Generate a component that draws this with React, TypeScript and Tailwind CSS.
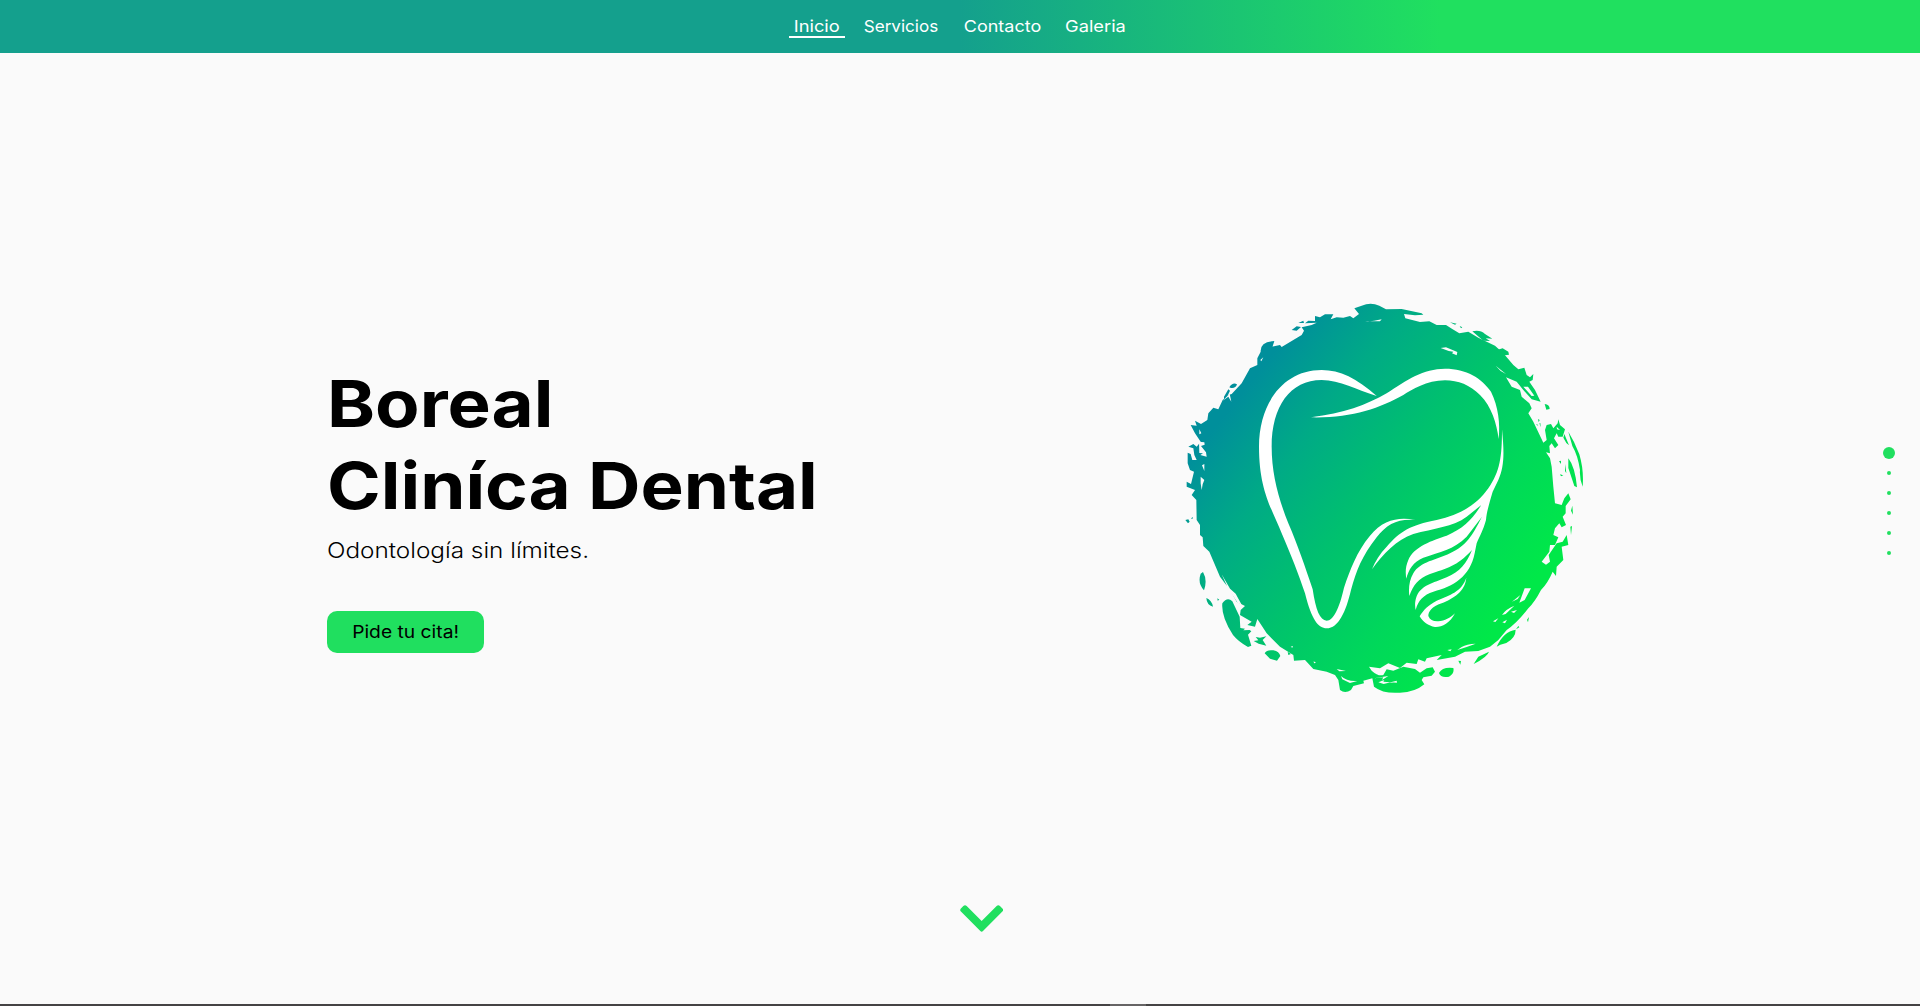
const links = [
  { label: 'Inicio', box: 'w-[56px]', stretch: 'scale-x-[1.11]', active: true },
  { label: 'Servicios', box: 'w-[86px]', stretch: 'scale-x-[1.035]', active: false },
  { label: 'Contacto', box: 'w-[90px]', stretch: 'scale-x-[1.09]', active: false },
  { label: 'Galeria', box: 'w-[70px]', stretch: 'scale-x-[1.105]', active: false },
];

function NavBar() {
  return (
    <header className="flex h-[53px] w-full shrink-0 justify-center bg-[linear-gradient(90deg,#14a08d_50%,#20e05f_75%)]">
      <nav className="flex gap-[13px] pr-[1px] pt-[14px]">
        {links.map((l) => (
          <a
            key={l.label}
            className={`flex h-[24px] justify-center whitespace-nowrap text-[16.5px] leading-[24px] text-white ${l.box} ${l.active ? 'border-b-2 border-white' : ''}`}
          >
            <span className={l.stretch}>{l.label}</span>
          </a>
        ))}
      </nav>
    </header>
  );
}

// Brush-stroke disc with a winged tooth on top of it
function Logo() {
  return (
    <svg viewBox="0 0 1290 1260" className="h-[420px] w-[430px] shrink-0">
      <defs>
        <linearGradient id="aurora" gradientUnits="userSpaceOnUse" x1="260" y1="250" x2="1080" y2="888">
          <stop offset="0" stopColor="#008f9b" />
          <stop offset="0.22" stopColor="#00aa86" />
          <stop offset="0.5" stopColor="#00c36c" />
          <stop offset="0.75" stopColor="#00d85a" />
          <stop offset="1" stopColor="#00e848" />
        </linearGradient>
      </defs>
      <g fill="url(#aurora)">
        <path d="M553,55 L575,47 Q602,36 628,47 L648,58 L695,57 L755,70 L760,74 L735,76 L702,72 L706,85 L750,96 L778,94 L800,105 L828,105 L848,118 L868,130 L895,125 L925,143 L950,155 L975,167 L1000,190 L1030,225 L1045,238 L1063,233 L1070,255 L1080,262 L1090,252 L1088,270 L1078,275 L1095,300 L1112,335 L1085,328 L1060,300 L1040,275 L1008,262 L1025,290 L1050,300 L1055,320 L1078,340 L1085,355 L1075,370 L1090,395 L1120,458 L1130,450 L1125,420 L1130,405 L1143,402 L1150,415 L1163,400 L1165,388 L1170,405 L1185,418 L1178,440 L1165,440 L1160,430 L1152,445 L1165,465 L1155,475 L1145,460 L1138,468 L1140,490 L1128,487 L1140,505 L1145,530 L1150,590 L1155,640 L1175,645 L1183,625 L1195,610 L1202,628 L1187,648 L1187,670 L1178,680 L1188,705 L1175,712 L1168,700 L1155,715 L1150,735 L1165,742 L1155,765 L1140,765 L1138,785 L1115,815 L1128,824 L1140,815 L1136,795 L1160,760 L1178,755 L1190,735 L1195,765 L1175,770 L1180,810 L1160,830 L1158,858 L1148,845 Q1133,880 1113,900 Q1095,935 1075,955 Q1040,1000 1010,1020 L985,1050 L960,1070 L925,1083 L885,1085 L855,1100 L800,1110 L815,1095 L770,1105 L765,1115 L745,1108 L740,1122 L710,1118 L690,1134 L655,1120 L630,1135 L597,1130 L605,1142 Q625,1160 640,1155 L650,1138 L670,1142 L700,1130 L735,1137 L750,1148 L770,1135 L788,1132 L795,1145 L785,1157 L760,1162 L755,1170 L763,1183 Q735,1207 690,1208 Q640,1212 612,1190 L607,1165 L580,1172 L582,1180 L550,1188 L543,1200 Q525,1212 510,1200 L505,1170 L495,1155 L470,1145 L430,1137 L405,1110 L372,1112 L370,1095 L330,1070 L290,1030 L262,987 L255,1010 L232,1005 L245,995 L210,975 L212,960 L225,948 L200,935 L180,900 L150,860 L118,785 L100,768 L98,742 L90,735 L90,705 L80,690 L79,630 L65,615 L75,600 L50,590 L50,575 L63,582 L72,545 L60,540 L53,520 L53,488 L62,492 L67,510 L80,510 L73,495 L70,475 L55,470 L70,462 L80,470 L92,455 L75,430 L62,405 L80,407 L75,392 L93,402 L112,390 L115,370 L130,353 L145,358 L158,330 L175,315 L185,312 L215,280 L240,235 L262,225 L262,205 L272,185 Q270,155 313,153 Q310,172 293,187 L305,170 L330,165 L335,171 L370,150 L395,135 L402,122 L395,112 L425,105 L440,98 L405,100 L415,92 L435,93 L435,78 L450,82 L465,73 L490,73 L482,88 L500,82 L520,83 L540,78 L550,85 L567,72 Z" />
        <path d="M365,120 L380,109 L393,111 L380,122 Z M385,99 L400,92 L402,99 Z M178,292 Q188,276 201,283 Q197,296 183,294 Z M162,335 L162,320 L175,298 L180,302 L168,328 Z M46,690 L55,688 L59,695 L54,700 Z M63,686 L68,680 L68,686 Z" />
        <path d="M99,846 Q113,870 102,901 Q82,880 92,851 Z M109,924 Q125,930 129,950 Q110,945 109,924 Z M142,925 L148,929 L143,932 Z M157,940 Q172,919 187,934 L209,980 L211,1014 L225,1016 L220,1021 L239,1020 L244,1024 L234,1034 L244,1067 L234,1071 Q205,1055 189,1035 Q153,980 157,940 Z M251,1053 L265,1051 L257,1041 L270,1043 L289,1039 L278,1050 L289,1067 L266,1061 Z M284,1090 Q290,1078 310,1081 Q328,1085 331,1098 L321,1112 L300,1106 Z M353,1085 L363,1092 L355,1095 Z" />
        <path d="M807,1149 Q817,1130 850,1134 Q854,1150 837,1160 Q812,1165 807,1149 Z M911,1122 L925,1100 L957,1085 Q953,1100 911,1122 Z M865,1112 L873,1113 L871,1124 Z M980,1070 Q1000,1025 1037,1019 Q1037,1044 1009,1059 L991,1064 Z M1038,1018 L1045,1008 L1048,1012 Z M1071,989 L1077,981 L1074,997 Z" />
        <path d="M907,124 Q930,118 945,132 L967,146 L947,145 L960,153 L940,152 Z M840,97 L860,101 L855,104 Z M869,108 L877,112 L873,115 Z M973,182 L998,175 L1015,185 L1017,194 L1005,196 Z M1124,342 Q1139,344 1139,357 L1129,359 Z M1098,404 L1111,399 L1112,410 Z M1104,387 L1109,390 L1106,397 Z M1195,425 Q1214,455 1228,493 Q1242,540 1238,590 Q1228,565 1230,540 Q1223,495 1207,468 Z M1195,505 Q1215,530 1221,592 L1213,588 L1195,534 Z M1167,514 L1173,512 L1173,522 Z M1186,522 L1189,550 L1185,543 Z M1170,553 L1180,556 L1173,559 Z M1207,647 L1209,674 L1203,662 Z M1201,710 L1206,708 L1203,735 Z M1183,432 L1197,466 L1189,459 L1180,443 Z" />
      </g>
      <g fill="#fafafa">
        <path d="M812,174 L828,172 L862,186 L860,196 L846,190 L850,185 L836,183 Z M585,94 Q605,96 635,88 L630,94 Z M977,227 L1008,252 L992,243 Z M1060,290 L1074,290 L1093,317 L1085,318 Z M1082,365 L1108,400 L1119,430 L1103,405 Z M1160,410 L1170,420 L1161,418 Z" />
        <path d="M155,853 L181,898 L174,895 Z M165,883 L197,911 L215,944 L203,938 Z M500,1137 L528,1143 L508,1144 Z M513,1158 Q530,1175 562,1173 L540,1179 L517,1168 Z M625,1177 Q650,1165 640,1175 L681,1178 L680,1172 L641,1182 Z M612,1165 L655,1158 L636,1170 L640,1162 Z M431,1114 L438,1118 L432,1120 Z M362,1070 L369,1068 L367,1073 Z" />
        <path d="M1064,895 L1083,895 L1064,930 L1048,938 Z M1026,935 L1051,915 L1043,927 Z M996,975 Q1006,958 1033,947 L1007,972 Z M1023,965 L1041,960 L1032,969 Z M997,997 L1011,989 L1005,1000 Z M969,994 L985,985 L976,996 Z M875,1071 Q890,1062 917,1061 L890,1071 L862,1080 Z M832,1080 L845,1078 L841,1084 Z" />
        <path d="M87,455 L103,457 L104,464 L93,468 L108,487 L110,500 L91,495 L99,490 L88,489 Z M92,560 L103,570 L98,583 L95,600 L92,580 Z M96,526 L103,522 L103,543 Z M158,332 L179,311 L184,335 L175,320 Z M271,210 L280,202 L274,214 Z M88,418 L94,430 L88,433 Z" />
      </g>
      <g fill="#ffffff">
        <path d="M620,318 C560,265 510,240 455,240 C340,240 267,340 267,470 C267,600 305,655 335,730 C365,800 385,850 405,910 C425,990 445,1015 470,1015 C505,1015 528,965 543,900 C560,840 575,800 620,742 C650,702 685,685 736,690 C690,680 640,687 600,737 C560,785 540,840 522,893 C508,955 490,992 470,992 C450,992 437,960 428,898 C405,830 385,770 355,700 C325,625 305,550 305,470 C305,350 360,270 455,270 C510,270 560,300 620,318 Z" />
        <path d="M423,382 C520,370 590,345 650,310 C710,270 760,236 825,236 C890,236 935,265 963,305 C985,350 991,400 986,447 C980,400 965,350 930,315 C900,285 865,271 825,271 C770,271 725,300 700,315 C630,355 540,385 423,382 Z" />
        <path d="M996,418 C1003,490 1003,530 985,570 L968,605 C958,640 950,665 948,690 C940,720 928,740 920,760 L914,790 C900,860 850,890 790,905 C760,915 745,930 737,960 C735,950 734,940 738,925 C750,885 790,880 830,862 C870,845 890,820 906,780 C860,830 830,835 780,852 C745,865 730,885 718,918 C715,895 718,870 730,850 C750,815 800,810 840,790 C890,765 905,740 936,680 L890,740 C850,780 810,785 760,803 C730,815 715,840 709,866 C706,850 706,830 715,810 C730,770 790,750 830,737 C880,715 905,690 934,645 L890,680 C850,710 790,715 730,732 C680,750 640,790 606,838 C615,815 630,790 650,770 C690,725 720,705 800,690 C870,675 920,645 955,595 C990,545 996,500 996,418 Z" />
        <path d="M889,863 C885,905 850,925 815,940 C785,950 775,965 775,978 C780,990 790,995 805,994 C825,992 840,985 855,970 C840,1000 815,1012 795,1011 C775,1008 758,995 749,979 C760,960 775,945 800,932 C840,915 875,905 889,863 Z" />
      </g>
    </svg>
  );
}

function PageDots() {
  return (
    <div className="absolute right-[25px] top-[447px] flex flex-col items-center">
      <span className="mb-3 size-3 rounded-full bg-[#20df5f]" />
      <div className="flex flex-col gap-4">
        {[1, 2, 3, 4, 5].map((n) => (
          <span key={n} className="size-1 rounded-full bg-[#20df5f]" />
        ))}
      </div>
    </div>
  );
}

export default function App() {
  return (
    <div className="relative flex h-[1006px] w-full flex-col overflow-hidden bg-[#fafafa] font-['Inter',sans-serif] text-black">
      <NavBar />
      <main className="flex flex-1 items-start justify-between pl-[327px] pr-[320px]">
        <section className="flex flex-col items-start pt-[310px]">
          <h1 className="origin-left scale-x-[1.118] whitespace-nowrap text-[65px] font-bold leading-[82px]">
            <span className="block">Boreal</span>
            <span className="block">Cliníca Dental</span>
          </h1>
          <p className="mt-[7px] origin-left scale-x-[1.105] whitespace-nowrap text-[22px] font-light leading-[32px]">
            Odontología sin límites.
          </p>
          <button className="mt-[45px] flex h-[42px] w-[157px] items-center justify-center rounded-[10px] bg-[#20df5f] text-[17.5px]">
            <span className="scale-x-[1.1]">Pide tu cita!</span>
          </button>
        </section>
        <div className="flex pt-[237px]">
          <Logo />
        </div>
      </main>
      <div className="flex h-[98px] shrink-0 pl-[960px]">
        <svg viewBox="0 0 130 82" className="-mt-[1.5px] h-[27.3px] w-[43.3px]">
          <path d="M2,19 Q-1,15 2,11 L10,3 Q15,-1 20,3 L65,48 L110,3 Q115,-1 120,3 L128,11 Q131,15 128,19 L69,78 Q65,82 61,78 Z" fill="#20df5f" />
        </svg>
      </div>
      <div className="flex h-[2px] shrink-0 bg-[#454344] pl-[1110px]">
        <div className="w-[36px] bg-[#666465]" />
      </div>
      <PageDots />
    </div>
  );
}
